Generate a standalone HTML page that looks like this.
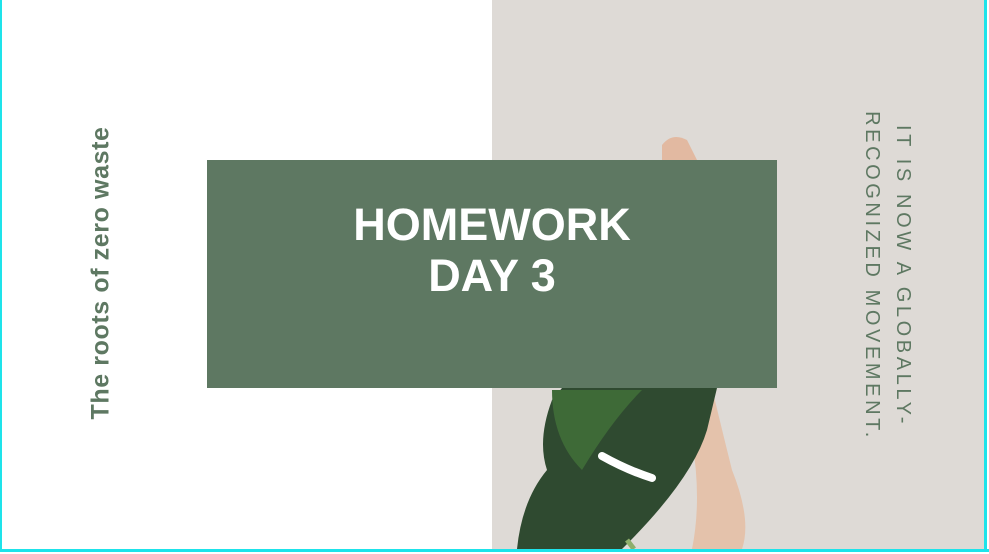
<!DOCTYPE html>
<html><head><style>
html,body{margin:0;padding:0}
body{width:989px;height:552px;position:relative;overflow:hidden;background:#fff;font-family:"Liberation Sans",sans-serif}
.cy{position:absolute;background:#1ee3ea}
.photo{position:absolute;left:492px;top:0;width:493px;height:549px;background:#dedad6}
.box{position:absolute;left:207px;top:160px;width:570px;height:228px;background:#5e7862}
.title{position:absolute;left:207px;top:199px;width:570px;text-align:center;color:#fff;font-weight:bold;font-size:45px;line-height:51px}
.lv{position:absolute;left:101px;top:273px;transform:translate(-50%,-50%) rotate(-90deg);white-space:nowrap;color:#5e7862;font-weight:bold;font-size:25px;letter-spacing:0.6px}
.rv{position:absolute;left:918px;top:106px;transform-origin:0 0;transform:rotate(90deg);white-space:nowrap;color:#5e7862;font-size:20px;letter-spacing:3.6px;line-height:31px;width:340px;text-align:center}
</style></head><body>
<div class="photo">
<svg width="493" height="549" viewBox="0 0 493 549">
<path d="M170 145 Q180 132 195 140 L205 160 L170 160Z" fill="#e2b9a1"/>
<path d="M220 388 Q230 430 240 470 Q260 520 250 549 L200 549 Q210 500 200 440Z" fill="#e4c2ab"/>
<path d="M60 400 Q45 440 55 470 Q30 500 25 549 L130 549 Q200 480 215 430 L225 388 L70 388Z" fill="#2f4a30"/>
<path d="M60 390 L150 390 Q120 420 90 470 Q60 440 60 390Z" fill="#3e6a37"/>
<path d="M110 456 Q135 470 160 478" stroke="#fff" stroke-width="8" fill="none" stroke-linecap="round"/>
<path d="M135 540 L142 549" stroke="#8fae6c" stroke-width="5"/>
</svg>
</div>
<div class="box"></div>
<div class="title">HOMEWORK<br>DAY 3</div>
<div class="lv">The roots of zero waste</div>
<div class="rv">IT IS NOW A GLOBALLY-<br>RECOGNIZED MOVEMENT.</div>
<div class="cy" style="left:0;top:0;width:2px;height:552px"></div>
<div class="cy" style="left:984px;top:0;width:3px;height:552px"></div>
<div class="cy" style="left:0;top:549px;width:989px;height:3px"></div>
</body></html>
